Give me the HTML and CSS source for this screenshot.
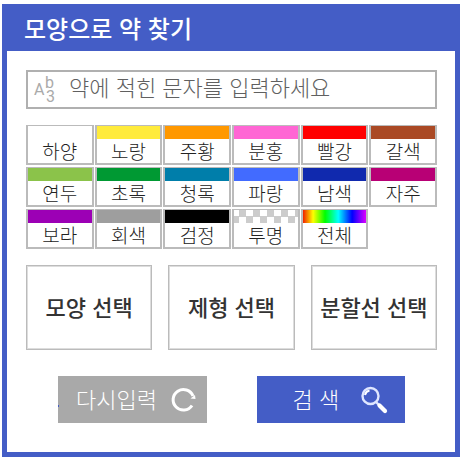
FILE: index.html
```html
<!DOCTYPE html>
<html lang="ko">
<head>
<meta charset="utf-8">
<meta name="viewport" content="width=device-width, initial-scale=1">
<title>모양으로 약 찾기</title>
<link rel="stylesheet" href="styles.css">
</head>
<body>
<form class="panel">
  <h1 class="panel-title">모양으로 약 찾기</h1>
  <div class="panel-body">
    <label class="search-box">
      <svg class="icon-text" viewBox="0 0 24 35" width="24" height="35" aria-hidden="true">
        <text x="1" y="23">A</text>
        <text x="12" y="16">b</text>
        <text x="13" y="30">3</text>
      </svg>
      <input class="search-input" type="text" aria-label="약에 적힌 문자" placeholder="약에 적힌 문자를 입력하세요">
    </label>

    <div class="colors">
      <button type="button" class="color"><span class="swatch white"></span>하양</button>
      <button type="button" class="color"><span class="swatch yellow"></span>노랑</button>
      <button type="button" class="color"><span class="swatch orange"></span>주황</button>
      <button type="button" class="color"><span class="swatch pink"></span>분홍</button>
      <button type="button" class="color"><span class="swatch red"></span>빨강</button>
      <button type="button" class="color"><span class="swatch brown"></span>갈색</button>
      <button type="button" class="color"><span class="swatch lime"></span>연두</button>
      <button type="button" class="color"><span class="swatch green"></span>초록</button>
      <button type="button" class="color"><span class="swatch teal"></span>청록</button>
      <button type="button" class="color"><span class="swatch blue"></span>파랑</button>
      <button type="button" class="color"><span class="swatch navy"></span>남색</button>
      <button type="button" class="color"><span class="swatch magenta"></span>자주</button>
      <button type="button" class="color"><span class="swatch purple"></span>보라</button>
      <button type="button" class="color"><span class="swatch gray"></span>회색</button>
      <button type="button" class="color"><span class="swatch black"></span>검정</button>
      <button type="button" class="color"><span class="swatch clear"></span>투명</button>
      <button type="button" class="color"><span class="swatch all"></span>전체</button>
    </div>

    <div class="choices">
      <button type="button" class="choice">모양 선택</button>
      <button type="button" class="choice">제형 선택</button>
      <button type="button" class="choice">분할선 선택</button>
    </div>

    <div class="actions">
      <button type="reset" class="action reset">
        <span class="action-label">다시입력</span>
        <svg viewBox="0 0 28 28" width="28" height="28" aria-hidden="true">
          <path d="M22 19.500A10.300 10.300 0 1 1 23 10" fill="none" stroke="#fff" stroke-width="3"/>
          <path d="M20.500 12.500L25.500 13L25 9Z" fill="#fff"/>
        </svg>
      </button>
      <button type="submit" class="action submit">
        <span class="action-label">검 색</span>
        <svg viewBox="0 0 28 28" width="28" height="28" aria-hidden="true">
          <circle cx="10.5" cy="10" r="8" fill="none" stroke="#dfe6ff" stroke-width="2.4"/>
          <path d="M5 9A6 6 0 0 1 9.500 4.500" fill="none" stroke="#fff" stroke-width="2"/>
          <path d="M16 16L19 19" stroke="#dfe6ff" stroke-width="2.4"/>
          <path d="M19.500 19.500L25 25" stroke="#fff" stroke-width="4.2" stroke-linecap="round"/>
        </svg>
      </button>
    </div>
  </div>
</form>
</body>
</html>
```
FILE: styles.css
```css
* {
  box-sizing: border-box;
}

body {
  margin: 4px 5px 4px 2px;
  background: #fff;
  color: #333;
  font-family: "Noto Sans CJK KR", sans-serif;
}

button,
input {
  margin: 0;
  padding: 0;
  font: inherit;
  color: inherit;
}

.panel {
  border: 5px solid #445dc6;
}

.panel-title {
  margin: 0;
  padding: 0 17px 4px;
  background: #445dc6;
  color: #fff;
  font-size: 24px;
  font-weight: 500;
  line-height: 38px;
}

.panel-body {
  padding: 19px 18px 29px 19px;
}

.search-box {
  display: flex;
  align-items: center;
  height: 39px;
  padding-left: 5px;
  border: 2px solid #b0b0b0;
}

.icon-text {
  flex: none;
  fill: #aaa;
  font-family: Roboto, sans-serif;
  font-size: 16px;
}

.search-input {
  flex: 1;
  min-width: 0;
  height: 35px;
  margin-left: 12px;
  padding-bottom: 7px;
  border: 0;
  background: none;
  font-size: 22px;
  font-weight: 300;
  outline: 0;
}

.search-input::placeholder {
  color: #606060;
}

.colors {
  display: grid;
  grid-template-columns: repeat(6, 1fr);
  gap: 2px 1px;
  margin-top: 16px;
}

.color {
  display: flex;
  flex-direction: column;
  align-items: center;
  height: 40px;
  border: 2px solid #bbb;
  border-top-width: 1px;
  background: #fff;
  color: #222;
  font-size: 19px;
  font-weight: 300;
  line-height: 24px;
}

.swatch {
  align-self: stretch;
  height: 13px;
}

.white { background: #fff; }
.yellow { background: #ffeb3b; }
.orange { background: #ff9800; }
.pink { background: #ff66d4; }
.red { background: #f00; }
.brown { background: #aa4924; }
.lime { background: #8bc34a; }
.green { background: #009933; }
.teal { background: #007eaa; }
.blue { background: #426bff; }
.navy { background: #1029ae; }
.magenta { background: #b80075; }
.purple { background: #9c00b5; }
.gray { background: #9e9e9e; }
.black { background: #000; }

.clear {
  background: repeating-conic-gradient(#fff 0 25%, #ccc 0 50%) 5px 0 / 14px 13px;
}

.all {
  background: linear-gradient(90deg, #f02000, #ff0 16%, #0f0 35%, #0ff 56%, #00f 78%, #d0f);
}

.choices {
  display: grid;
  grid-template-columns: repeat(3, 1fr);
  gap: 16px;
  margin-top: 16px;
}

.choice {
  height: 85px;
  padding-bottom: 4px;
  border: 1px solid #bbb;
  box-shadow: inset 0 0 0 1px #ddd;
  background: #fff;
  font-size: 22px;
  font-weight: 500;
  white-space: nowrap;
}

.actions {
  display: grid;
  grid-template-columns: 1fr 1fr;
  gap: 50px;
  margin: 26px 32px 0;
}

.action {
  display: flex;
  align-items: center;
  height: 47px;
  padding: 0 9px 0 18px;
  border: 0;
  color: #fff;
  font-size: 22px;
  font-weight: 300;
}

.action-label {
  flex: 1;
  padding-bottom: 4px;
  text-align: left;
  white-space: nowrap;
}

.reset {
  position: relative;
  background: #a9a9a9;
}

.reset::before {
  content: "";
  position: absolute;
  left: 0;
  bottom: 16px;
  width: 1px;
  height: 2px;
  background: #445dc6;
}

.submit {
  padding: 0 17px 0 36px;
  background: #445dc6;
}
```
